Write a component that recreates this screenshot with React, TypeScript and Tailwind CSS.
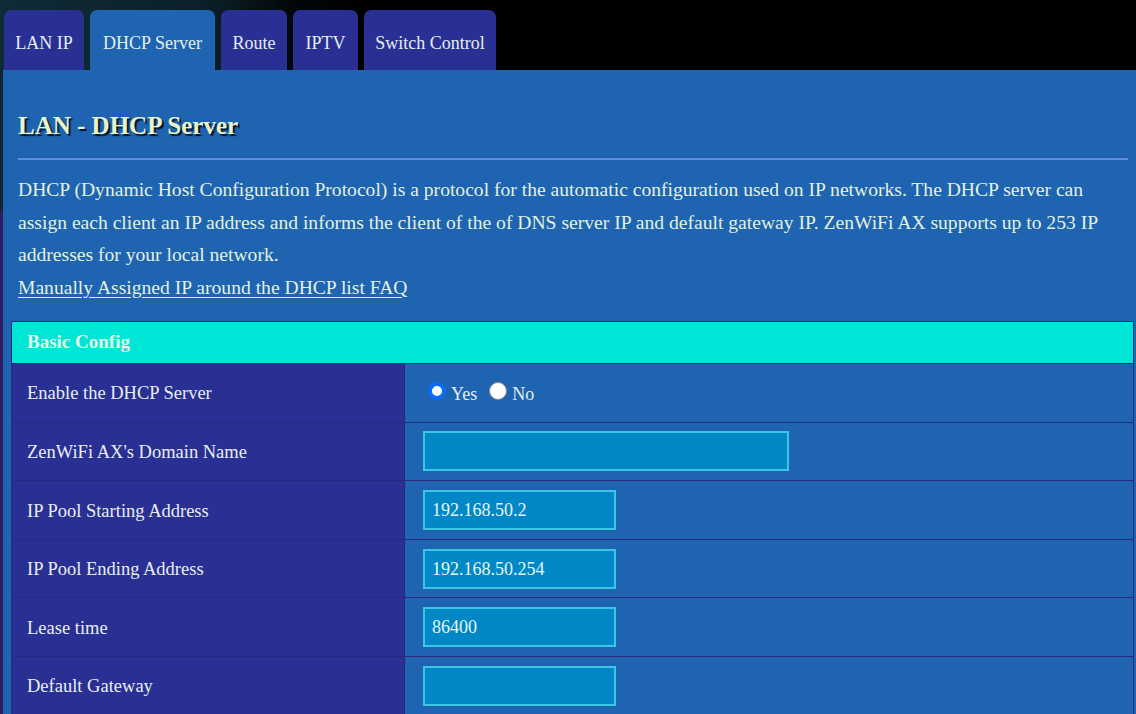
import React from "react";

const tabs = [
  { label: "LAN IP", w: "w-[80px]", active: false },
  { label: "DHCP Server", w: "w-[125px]", active: true },
  { label: "Route", w: "w-[66px]", active: false },
  { label: "IPTV", w: "w-[65px]", active: false },
  { label: "Switch Control", w: "w-[132px]", active: false },
];

function Row({ label, children }: { label: string; children: React.ReactNode }) {
  return (
    <div className="flex h-[58.6px] border-b border-[#27287e]">
      <div className="flex w-[393px] shrink-0 items-center border-r border-[#25267c] bg-[#2a2f93] pl-[15px] pt-[3px] text-[18.5px] text-[#e6eef0]">
        {label}
      </div>
      <div className="flex flex-1 items-center bg-[#1e64b0] pl-[18px]">{children}</div>
    </div>
  );
}

function Field({ value = "", wide = false }: { value?: string; wide?: boolean }) {
  return (
    <div
      className={`flex h-[40px] items-center border-2 border-[#3cc6e4] bg-[#0088c6] pl-[7px] pt-[1px] text-[18px] text-[#e8f4f4] ${
        wide ? "w-[366px]" : "w-[193px]"
      }`}
    >
      {value}
    </div>
  );
}

export default function App() {
  return (
    <div
      className="relative h-[714px] w-[1136px] overflow-hidden bg-black"
      style={{ fontFamily: '"Liberation Serif", "Times New Roman", serif' }}
    >
      <div className="flex h-[70px] items-end gap-[6px] bg-[linear-gradient(90deg,#0f2b36_0%,#0b2029_18%,#020608_26%,#000_32%)] pl-[4px]">
        {tabs.map((t) => (
          <div
            key={t.label}
            className={`flex h-[60px] items-center justify-center rounded-t-[7px] pt-[6px] text-[18px] text-[#e4eef0] ${t.w} ${
              t.active ? "bg-[#1e64b0]" : "bg-[#2a2f93]"
            }`}
          >
            {t.label}
          </div>
        ))}
      </div>
      <div className="flex h-[644px]">
        <div className="w-[3px] shrink-0 bg-[linear-gradient(180deg,#0c2631_0px,#0c2631_138px,#2e1d5e_142px,#2e1d5e_100%)]" />
        <div className="flex-1 bg-[#1e64b0]">
          <div className="pl-[15px] pr-[8px] pt-[41px]">
            <h1
              className="text-[25px] font-bold leading-[30px] text-[#e8f5cc]"
              style={{ textShadow: "2px 2px 1px #08122a" }}
            >
              LAN - DHCP Server
            </h1>
            <div className="mt-[16px] h-[3px] border-t border-[#2a55a8] bg-[#5a90dc]" />
            <p className="mt-[14px] text-[19.6px] leading-[32.5px] text-[#e2f1e0]">
              DHCP (Dynamic Host Configuration Protocol) is a protocol for the automatic configuration used on IP
              networks. The DHCP server can assign each client an IP address and informs the client of the of DNS
              server IP and default gateway IP. ZenWiFi AX supports up to 253 IP addresses for your local network.
              <br />
              <span className="underline underline-offset-[3px]">Manually Assigned IP around the DHCP list FAQ</span>
            </p>
          </div>
          <div className="ml-[8px] mr-[2px] mt-[17px] border border-b-0 border-[#27287e]">
            <div className="flex h-[42px] items-center border-b border-[#27287e] bg-[#00e6d6] pl-[15px] text-[19px] font-bold text-[#e2f7e4]">
              Basic Config
            </div>
            <Row label="Enable the DHCP Server">
              <div className="flex items-center gap-[5px] pl-[5px] pt-[3px] text-[18px] text-[#e4eef0]">
                <span className="mb-[6px] h-[18px] w-[18px] shrink-0 rounded-full border-[4px] border-[#0a6cf5] bg-white" />
                <span>Yes</span>
                <span className="mb-[6px] ml-[7px] h-[18px] w-[18px] shrink-0 rounded-full border border-[#8a8a8a] bg-white" />
                <span>No</span>
              </div>
            </Row>
            <Row label="ZenWiFi AX's Domain Name">
              <Field wide />
            </Row>
            <Row label="IP Pool Starting Address">
              <Field value="192.168.50.2" />
            </Row>
            <Row label="IP Pool Ending Address">
              <Field value="192.168.50.254" />
            </Row>
            <Row label="Lease time">
              <Field value="86400" />
            </Row>
            <Row label="Default Gateway">
              <Field />
            </Row>
          </div>
        </div>
      </div>
    </div>
  );
}
